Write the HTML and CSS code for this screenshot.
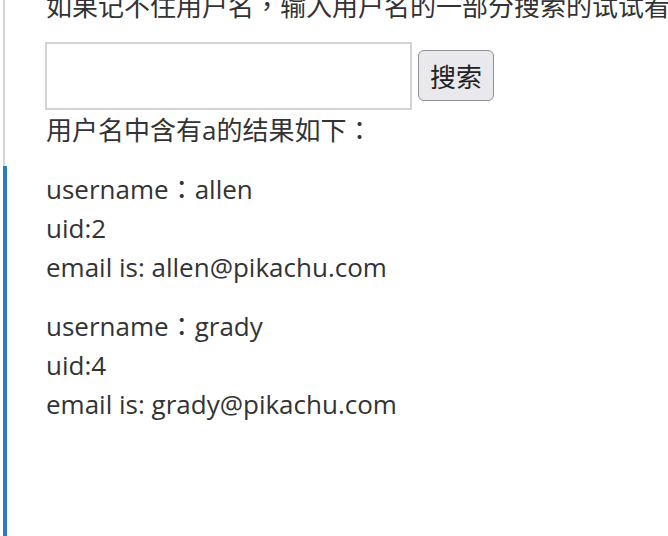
FILE: index.html
```html
<!DOCTYPE html>
<html lang="zh-CN">
<head>
<meta charset="utf-8">
<title>search</title>
<link rel="stylesheet" href="styles.css">
</head>
<body>
<div class="page">
  <div class="rail">
    <div class="rail-top"></div>
    <div class="rail-active"></div>
  </div>
  <main class="main">
    <p class="hint">如果记不住用户名<span class="punct" lang="zh-Hant-TW">，</span>输入用户名的一部分搜索的试试看</p>
    <form class="search">
      <input class="search-input" type="text">
      <button class="search-btn" type="button">搜索</button>
    </form>
    <p class="result-title">用户名中含有a的结果如下<span class="punct" lang="zh-Hant-TW">：</span></p>
    <div class="result">
      <div>username<span class="punct" lang="zh-Hant-TW">：</span>allen</div>
      <div>uid:2</div>
      <div>email is: allen@pikachu.com</div>
    </div>
    <div class="result">
      <div>username<span class="punct" lang="zh-Hant-TW">：</span>grady</div>
      <div>uid:4</div>
      <div>email is: grady@pikachu.com</div>
    </div>
  </main>
</div>
</body>
</html>
```
FILE: styles.css
```css
html, body {
  margin: 0;
  padding: 0;
  background: #fff;
  height: 100%;
  overflow: hidden;
}
.page {
  display: flex;
  height: 536px;
  font-family: "Open Sans", "Noto Sans CJK SC", sans-serif;
  font-size: 26px;
  line-height: 39px;
  color: #333;
}
.punct {
  font-family: "Noto Sans CJK TC", "Noto Sans CJK SC", sans-serif;
  line-height: 1;
}
.rail {
  width: 8px;
  display: flex;
  flex-direction: column;
  align-items: flex-start;
}
.rail-top {
  margin-left: 3px;
  width: 2px;
  height: 166px;
  background: #d4d4d4;
}
.rail-active {
  margin-left: 3px;
  width: 4px;
  flex: 1;
  background: #2c7bbf;
}
.main {
  padding-left: 38px;
  flex: 1;
  min-width: 0;
  overflow: hidden;
}
.hint {
  margin: -13px 0 0;
  white-space: nowrap;
}
.search {
  margin: 16px 0 0 -1px;
  display: flex;
  align-items: center;
  gap: 6px;
}
.search-input {
  box-sizing: border-box;
  width: 367px;
  height: 68px;
  border: 2px solid #d3d3d3;
  margin: 0;
  padding: 0 6px;
  font: inherit;
}
.search-btn {
  box-sizing: border-box;
  height: 51px;
  width: 76px;
  padding: 0;
  border: 1.5px solid #8f8f9d;
  border-radius: 6px;
  background: #e9e9ed;
  font-family: "Noto Sans CJK SC", sans-serif;
  font-size: 26px;
  color: #222;
  margin-top: -1px;
}
.result-title {
  margin: 1px 0 0;
}
.result {
  margin-top: 20px;
}
```
